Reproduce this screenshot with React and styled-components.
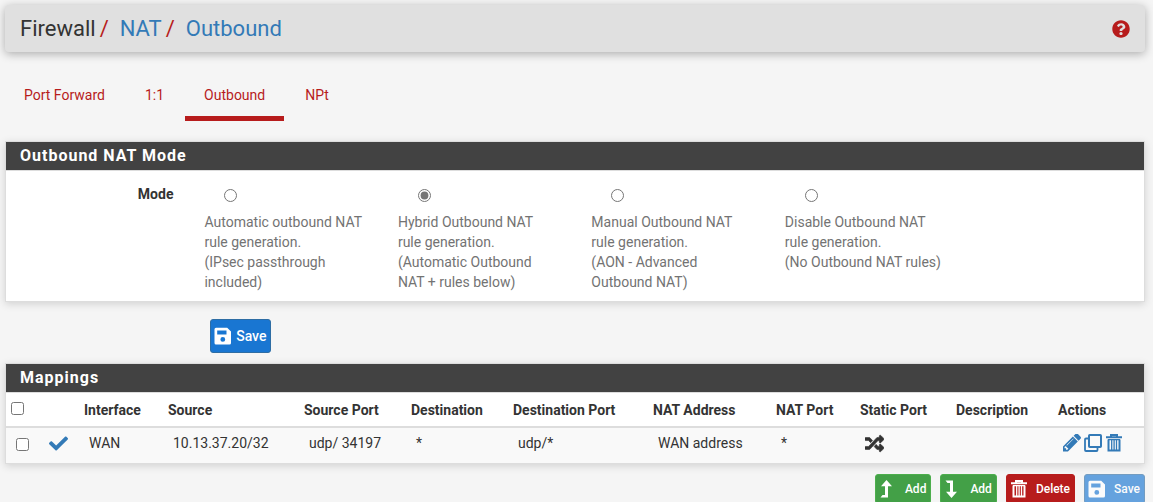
import React from "react";
import styled, { createGlobalStyle, css } from "styled-components";
import { FaCheck, FaQuestionCircle, FaRandom } from "react-icons/fa";

const GlobalStyle = createGlobalStyle`
  *, *::before, *::after { box-sizing: border-box; }
  body {
    margin: 0;
    background: #f5f5f5;
    color: #333;
    font-family: Roboto, "Liberation Sans", sans-serif;
    font-size: 14px;
    line-height: 20px;
  }
`;

const Page = styled.div`
  padding: 5px 8px 0 5px;
`;

const Header = styled.header`
  display: flex;
  align-items: center;
  justify-content: space-between;
  height: 47px;
  padding: 0 15px;
  border-radius: 4px;
  background: #e0e0e0;
  box-shadow: 0 2px 10px rgba(0, 0, 0, 0.3);
`;

const Crumbs = styled.ol`
  display: flex;
  margin: 0;
  padding: 0;
  list-style: none;
  font-size: 22px;
  line-height: 24px;
`;

const Crumb = styled.li`
  & + &::before {
    content: "/";
    padding: 0 11px 0 4px;
    color: #b71c1c;
  }
  a {
    color: #337ab7;
    text-decoration: none;
  }
`;

const HelpLink = styled.a`
  display: flex;
  color: #b71c1c;
  font-size: 18px;
`;

const Tabs = styled.nav`
  display: flex;
  gap: 2px;
  margin: 18px 0 20px;
`;

const Tab = styled.a`
  padding: 15px 19px 11px;
  border-bottom: 5px solid ${(p) => (p.$active ? "#b71c1c" : "transparent")};
  color: #b71c1c;
  text-decoration: none;
`;

const Panel = styled.section`
  border: 1px solid #ddd;
  background: #fff;
  box-shadow: 0 2px 8px rgba(0, 0, 0, 0.15);
`;

const PanelTitle = styled.h2`
  margin: 0;
  padding: 4px 14px;
  border-bottom: 1px solid #ddd;
  background: #424242;
  background-clip: padding-box;
  color: #fff;
  font-size: 16px;
  font-weight: 700;
  line-height: 20px;
  letter-spacing: 1px;
`;

const ModeGroup = styled.div`
  display: flex;
  padding: 13px 0 9px;
`;

const ModeLabel = styled.div`
  flex: 0 0 17%;
  padding-right: 26px;
  font-weight: 700;
  text-align: right;
`;

const ModeOption = styled.label`
  flex: 0 0 17%;
  padding: 0 27px 0 5px;
  color: #737373;
`;

const Radio = styled.input`
  display: block;
  width: 13px;
  height: 13px;
  margin: 5px 0 10px 20px;
  accent-color: #767676;
`;

const tones = {
  primary: css`
    background: #1976d2;
    border-color: #2e6da4;
  `,
  success: css`
    background: #43a047;
    border-color: #4cae4c;
  `,
  danger: css`
    background: #b71c1c;
    border-color: #b71c1c;
  `,
};

const Button = styled.button`
  display: inline-flex;
  align-items: center;
  gap: ${(p) => (p.$small ? 8 : 4)}px;
  height: ${(p) => (p.$small ? 30 : 34)}px;
  padding: 0 4px 0 3px;
  border: 1px solid;
  border-radius: 3px;
  color: #fff;
  font-family: inherit;
  font-size: ${(p) => (p.$small ? 12 : 14)}px;
  font-weight: 500;
  white-space: nowrap;
  ${(p) => tones[p.$tone]}
  &:disabled { opacity: 0.65; }
  svg {
    width: 18px;
    height: 18px;
  }
`;

const FormActions = styled.div`
  padding: 17px 0 10px 18%;
`;

const Table = styled.table`
  width: 100%;
  border-collapse: collapse;
  th, td {
    text-align: left;
    vertical-align: top;
  }
  th {
    padding: 7px 5px 6px;
    border-bottom: 2px solid #ddd;
  }
  td {
    height: 36px;
    padding: 5px 10px;
    background: #f9f9f9;
  }
`;

const Check = styled.input`
  display: block;
  width: 13px;
  height: 13px;
  margin: ${(p) => (p.$head ? 2 : 5)}px 0 0;
`;

const IconSlot = styled.span`
  display: flex;
  align-items: center;
  height: 20px;
  color: ${(p) => (p.$plain ? "#333" : "#337ab7")};
  font-size: 19px;
`;

const RowActions = styled.div`
  display: flex;
  align-items: center;
  gap: 3px;
  height: 20px;
`;

const IconLink = styled.a`
  display: flex;
  color: #337ab7;
  font-size: 18px;
`;

const Toolbar = styled.div`
  display: flex;
  justify-content: flex-end;
  gap: 9px;
  padding-top: 10px;
`;

const Glyph = ({ viewBox = "0 0 18 18", children }) => (
  <svg width="1em" height="1em" viewBox={viewBox} fill="none" aria-hidden="true">
    {children}
  </svg>
);

const TrashIcon = () => (
  <Glyph>
    <path d="M1 3.2h16M6 2.5V1h6v1.5" stroke="currentColor" strokeWidth="2" />
    <path d="M3.5 5.5v11h11v-11" stroke="currentColor" strokeWidth="2" />
    <path d="M3 5.6h12M6.7 5.5v11M9.1 5.5v11M11.5 5.5v11" stroke="currentColor" strokeWidth="1.3" />
  </Glyph>
);

const SaveIcon = () => (
  <Glyph>
    <path
      fill="currentColor"
      fillRule="evenodd"
      d="M2 .8h11.2L17 4.6V16a1.5 1.5 0 0 1-1.5 1.5H2A1.5 1.5 0 0 1 .5 16V2.3A1.5 1.5 0 0 1 2 .8zM3.2 3.5v4h9.3v-4zM8.8 10a2.4 2.4 0 1 0 0 4.8 2.4 2.4 0 0 0 0-4.8z"
    />
  </Glyph>
);

const PencilIcon = () => (
  <Glyph viewBox="128 200 1515 1515">
    <path
      fill="currentColor"
      d="M491 1536l91-91-235-235-91 91v107h128v128h107zm523-928q0-22-22-22-10 0-17 7l-542 542q-7 7-7 17 0 22 22 22 10 0 17-7l542-542q7-7 7-17zm-54-192l416 416-832 832h-416v-416zm683 96q0 53-37 90l-166 166-416-416 166-165q36-38 90-38 53 0 91 38l235 234q37 39 37 91z"
    />
  </Glyph>
);

const CloneIcon = () => (
  <Glyph>
    <rect x="5" y="1" width="12" height="12" rx=".8" stroke="currentColor" strokeWidth="2" />
    <path d="M4 4.5H2a1 1 0 0 0-1 1V16a1 1 0 0 0 1 1h10.5a1 1 0 0 0 1-1v-2" stroke="currentColor" strokeWidth="1.8" />
  </Glyph>
);

const AddTopIcon = () => (
  <Glyph>
    <path fill="currentColor" d="M7.5 0L13 6.2H9V17.5H1.5L3.5 15H6V6.2H2z" />
  </Glyph>
);

const AddBottomIcon = () => (
  <Glyph>
    <path fill="currentColor" d="M7.5 18L13 11.8H9V.5H1.5L3.5 3H6V11.8H2z" />
  </Glyph>
);

const modes = [
  ["Automatic outbound NAT rule generation.", "(IPsec passthrough included)"],
  ["Hybrid Outbound NAT rule generation.", "(Automatic Outbound NAT + rules below)"],
  ["Manual Outbound NAT rule generation.", "(AON - Advanced Outbound NAT)"],
  ["Disable Outbound NAT rule generation.", "(No Outbound NAT rules)"],
];

const columns = [
  ["Interface", 84],
  ["Source", 136],
  ["Source Port", 107],
  ["Destination", 102],
  ["Destination Port", 140],
  ["NAT Address", 123],
  ["NAT Port", 84],
  ["Static Port", 96],
  ["Description", 102],
  ["Actions", 91],
];

export default function App() {
  return (
    <Page>
      <GlobalStyle />
      <Header>
        <Crumbs>
          <Crumb>Firewall</Crumb>
          <Crumb><a href="#nat">NAT</a></Crumb>
          <Crumb><a href="#outbound">Outbound</a></Crumb>
        </Crumbs>
        <HelpLink href="#help" aria-label="Help"><FaQuestionCircle /></HelpLink>
      </Header>

      <Tabs>
        <Tab href="#port-forward">Port Forward</Tab>
        <Tab href="#one-to-one">1:1</Tab>
        <Tab href="#outbound" $active>Outbound</Tab>
        <Tab href="#npt">NPt</Tab>
      </Tabs>

      <form onSubmit={(e) => e.preventDefault()}>
        <Panel>
          <PanelTitle>Outbound NAT Mode</PanelTitle>
          <ModeGroup role="radiogroup" aria-labelledby="mode-label">
            <ModeLabel id="mode-label">Mode</ModeLabel>
            {modes.map(([title, note], i) => (
              <ModeOption key={title}>
                <Radio type="radio" name="mode" defaultChecked={i === 1} />
                {title}
                <br />
                {note}
              </ModeOption>
            ))}
          </ModeGroup>
        </Panel>
        <FormActions>
          <Button type="submit" $tone="primary"><SaveIcon />Save</Button>
        </FormActions>
      </form>

      <Panel>
        <PanelTitle>Mappings</PanelTitle>
        <Table>
          <colgroup>
            <col width="33" />
            <col width="40" />
            {columns.map(([name, width]) => <col key={name} width={width} />)}
          </colgroup>
          <thead>
            <tr>
              <th><Check type="checkbox" $head aria-label="Select all" /></th>
              <th />
              {columns.map(([name]) => <th key={name} scope="col">{name}</th>)}
            </tr>
          </thead>
          <tbody>
            <tr>
              <td><Check type="checkbox" aria-label="Select mapping" /></td>
              <td><IconSlot><FaCheck /></IconSlot></td>
              <td>WAN</td>
              <td>10.13.37.20/32</td>
              <td>udp/ 34197</td>
              <td>*</td>
              <td>udp/*</td>
              <td>WAN address</td>
              <td>*</td>
              <td><IconSlot $plain><FaRandom stroke="currentColor" strokeWidth="16" /></IconSlot></td>
              <td />
              <td>
                <RowActions>
                  <IconLink href="#edit" aria-label="Edit mapping"><PencilIcon /></IconLink>
                  <IconLink href="#copy" aria-label="Copy mapping"><CloneIcon /></IconLink>
                  <IconLink href="#delete" aria-label="Delete mapping"><TrashIcon /></IconLink>
                </RowActions>
              </td>
            </tr>
          </tbody>
        </Table>
      </Panel>

      <Toolbar>
        <Button type="button" $small $tone="success"><AddTopIcon />Add</Button>
        <Button type="button" $small $tone="success"><AddBottomIcon />Add</Button>
        <Button type="button" $small $tone="danger"><TrashIcon />Delete</Button>
        <Button type="button" $small $tone="primary" disabled><SaveIcon />Save</Button>
      </Toolbar>
    </Page>
  );
}
